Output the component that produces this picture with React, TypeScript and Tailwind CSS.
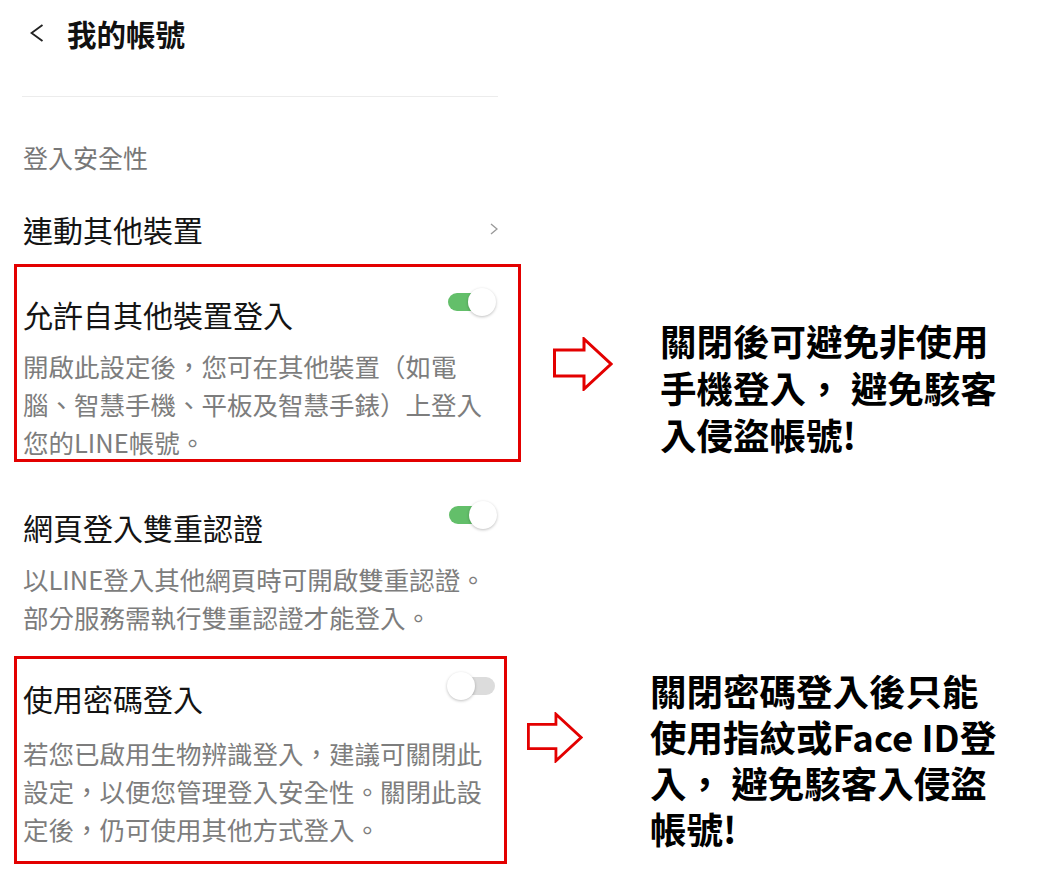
import React from 'react';

// ===========================================
// SMALL PIECES
// ===========================================

interface ToggleProps {
  on: boolean;
}

/** Android-style switch: thin track with a larger round knob */
function Toggle({ on }: ToggleProps) {
  return (
    <div className="relative w-[49px] h-[28px] shrink-0 -mt-[6px]">
      <div
        className={`absolute left-[1px] right-[1px] top-[5px] h-[18px] rounded-full ${
          on ? 'bg-[#63bf6a]' : 'bg-[#dcdcdc]'
        }`}
      />
      <div
        className={`absolute top-0 w-[28px] h-[28px] rounded-full bg-white shadow-[0_1px_3px_rgba(0,0,0,0.25)] ${
          on ? 'right-0' : 'left-0'
        }`}
      />
    </div>
  );
}

/** Outlined red block arrow used in the annotations */
function OutlineArrow({ className }: { className: string }) {
  return (
    <svg className={className} viewBox="0 0 60 54" fill="none">
      <path
        d="M1.5 13 H31 V2 L58 27 L31 52 V39 H1.5 Z"
        fill="#ffffff"
        stroke="#e30000"
        strokeWidth="3"
        strokeLinejoin="miter"
      />
    </svg>
  );
}

interface SettingProps {
  title: string;
  on: boolean;
  lines: string[];
  descGap: string;
}

/** Title + switch row and grey multi-line description */
function Setting({ title, on, lines, descGap }: SettingProps) {
  return (
    <div>
      <div className="flex items-start justify-between">
        <div className="text-[30px] leading-[40px] text-[#141414] whitespace-nowrap">{title}</div>
        <Toggle on={on} />
      </div>
      <div className={`${descGap} text-[25.5px] leading-[38px] text-[#7d7d7d]`}>
        {lines.map((line) => (
          <div key={line} className="whitespace-nowrap">
            {line}
          </div>
        ))}
      </div>
    </div>
  );
}

function Annotation({ lines, className }: { lines: string[]; className: string }) {
  return (
    <div className={`${className} text-[36.5px] font-bold text-black`}>
      {lines.map((line) => (
        <div key={line} className="whitespace-nowrap">
          {line}
        </div>
      ))}
    </div>
  );
}

// ===========================================
// PAGE
// ===========================================

export default function App() {
  return (
    <div className="w-[1044px] h-[881px] bg-white overflow-hidden flex flex-col font-['Noto_Sans_CJK_TC','Noto_Sans',sans-serif]">
      {/* header */}
      <div className="h-[66px] flex items-center pl-[30px]">
        <svg className="w-[14px] h-[18px]" viewBox="0 0 14 18" fill="none">
          <path d="M12.5 1 L1.5 9 L12.5 17" stroke="#222" strokeWidth="1.9" />
        </svg>
        <div className="ml-[23px] text-[29.5px] leading-[40px] font-bold text-[#111]">我的帳號</div>
      </div>
      <div className="mt-[30px] ml-[22px] w-[476px] h-px bg-[#ececec]" />

      {/* section label */}
      <div className="mt-[42px] ml-[23px] text-[25px] leading-[36px] text-[#777]">登入安全性</div>

      {/* linked devices */}
      <div className="mt-[34px] ml-[23px] w-[475px] flex items-center justify-between">
        <div className="text-[30px] leading-[40px] text-[#141414]">連動其他裝置</div>
        <svg className="w-[8px] h-[12px]" viewBox="0 0 8 12" fill="none">
          <path d="M1 1 L7 6 L1 11" stroke="#9a9a9a" strokeWidth="1.4" />
        </svg>
      </div>

      {/* allow login from other devices */}
      <div className="mt-[15px] flex items-start">
        <div className="ml-[14px] w-[507px] h-[198px] border-[3px] border-[#e30000] pt-[27px] pl-[6px] pr-[22px]">
          <Setting
            title="允許自其他裝置登入"
            on
            descGap="mt-[13px]"
            lines={['開啟此設定後，您可在其他裝置（如電', '腦、智慧手機、平板及智慧手錶）上登入', '您的LINE帳號。']}
          />
        </div>
        <OutlineArrow className="ml-[32px] mt-[73px] w-[60px] h-[54px] shrink-0" />
        <Annotation
          className="ml-[47px] mt-[53px] leading-[47px]"
          lines={['關閉後可避免非使用', '手機登入， 避免駭客', '入侵盜帳號!']}
        />
      </div>

      {/* web two-step */}
      <div className="mt-[45px] ml-[23px] w-[474px]">
        <Setting
          title="網頁登入雙重認證"
          on
          descGap="mt-[13px]"
          lines={['以LINE登入其他網頁時可開啟雙重認證。', '部分服務需執行雙重認證才能登入。']}
        />
      </div>

      {/* password login */}
      <div className="mt-[20px] flex items-start">
        <div className="ml-[14px] w-[493px] h-[208px] border-[3px] border-[#e30000] pt-[19px] pl-[6px] pr-[8px]">
          <Setting
            title="使用密碼登入"
            on={false}
            descGap="mt-[16px]"
            lines={['若您已啟用生物辨識登入，建議可關閉此', '設定，以便您管理登入安全性。關閉此設', '定後，仍可使用其他方式登入。']}
          />
        </div>
        <OutlineArrow className="ml-[20px] mt-[56px] w-[56px] h-[51px] shrink-0" />
        <Annotation
          className="ml-[67px] mt-[12px] leading-[46px]"
          lines={['關閉密碼登入後只能', '使用指紋或Face ID登', '入， 避免駭客入侵盜', '帳號!']}
        />
      </div>
    </div>
  );
}
